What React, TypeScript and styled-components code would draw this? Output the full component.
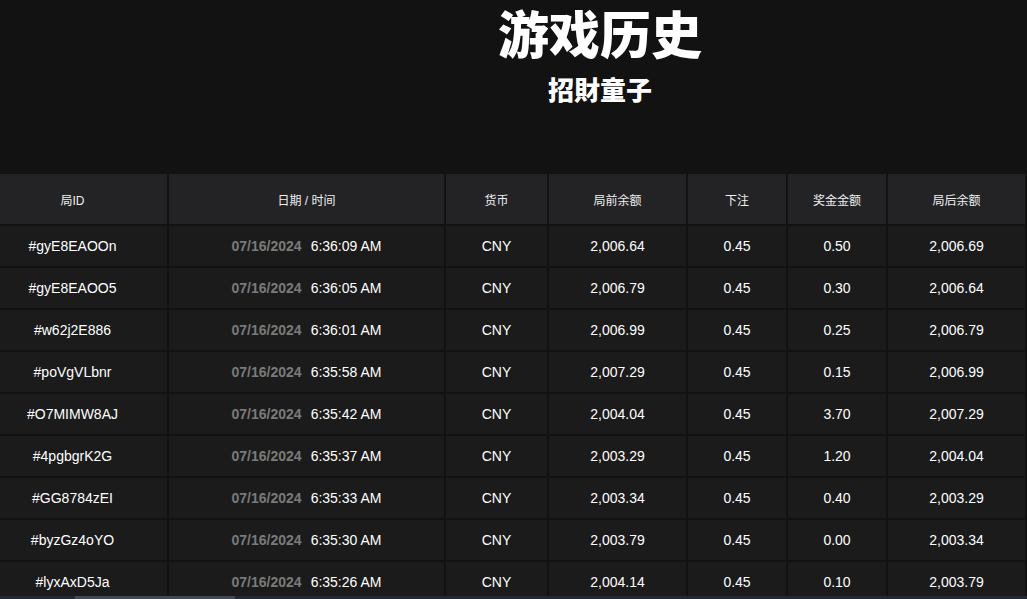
import React from "react";
import styled, { createGlobalStyle } from "styled-components";

const GlobalStyle = createGlobalStyle`
  html, body {
    margin: 0;
    padding: 0;
    background: #121213;
    overflow: hidden;
  }
  body {
    font-family: "Liberation Sans", Arial, sans-serif;
    color: #ffffff;
  }
`;

const Page = styled.div`
  width: 1027px;
  height: 599px;
  overflow: hidden;
  background: #121213;
  display: flex;
  flex-direction: column;
`;

const Hero = styled.header`
  flex-shrink: 0;
  height: 174px;
  box-sizing: border-box;
  padding-left: 173px;
  display: flex;
  flex-direction: column;
  align-items: center;
`;

const Title = styled.h1`
  margin: -1px 0 0;
  font-family: "Noto Sans CJK SC", sans-serif;
  font-weight: 900;
  font-size: 51px;
  line-height: 66px;
  color: #ffffff;
`;

const Subtitle = styled.h2`
  margin: 8px 0 0;
  font-family: "Noto Sans CJK SC", sans-serif;
  font-weight: 900;
  font-size: 26px;
  line-height: 32px;
  color: #ffffff;
`;

const Grid = styled.div`
  flex-shrink: 0;
  display: grid;
  grid-template-columns: 167px 275px 101px 137px 98px 98px 137px;
  column-gap: 2px;
  row-gap: 2px;
  width: 1025px;
  padding-right: 2px;
  background: #121213;
`;

const HeadCell = styled.div<{ $first?: boolean }>`
  height: 50px;
  box-sizing: border-box;
  padding-right: ${(p) => (p.$first ? "22px" : "0")};
  background: #232325;
  display: flex;
  align-items: center;
  justify-content: center;
  font-family: "Liberation Sans", "Noto Sans CJK SC", sans-serif;
  font-size: 12px;
  color: #f0f0f0;
`;

const Cell = styled.div<{ $first?: boolean }>`
  height: 40px;
  box-sizing: border-box;
  padding-right: ${(p) => (p.$first ? "22px" : "0")};
  background: #1b1b1c;
  display: flex;
  align-items: center;
  justify-content: center;
  font-size: 14px;
  color: #ffffff;
  white-space: nowrap;
`;

const DateText = styled.span`
  font-weight: 700;
  color: #7a7a7a;
  margin-right: 9px;
`;

const ScrollTrack = styled.div`
  position: fixed;
  left: 0;
  bottom: 0;
  width: 1027px;
  height: 3px;
  background: #222b33;
`;

const ScrollThumb = styled.div`
  position: absolute;
  left: 75px;
  top: 0;
  width: 160px;
  height: 3px;
  background: #3f4a54;
`;

const headers = ["局ID", "日期 / 时间", "货币", "局前余额", "下注", "奖金金额", "局后余额"];

const rows = [
  ["#gyE8EAOOn", "6:36:09 AM", "2,006.64", "0.45", "0.50", "2,006.69"],
  ["#gyE8EAOO5", "6:36:05 AM", "2,006.79", "0.45", "0.30", "2,006.64"],
  ["#w62j2E886", "6:36:01 AM", "2,006.99", "0.45", "0.25", "2,006.79"],
  ["#poVgVLbnr", "6:35:58 AM", "2,007.29", "0.45", "0.15", "2,006.99"],
  ["#O7MIMW8AJ", "6:35:42 AM", "2,004.04", "0.45", "3.70", "2,007.29"],
  ["#4pgbgrK2G", "6:35:37 AM", "2,003.29", "0.45", "1.20", "2,004.04"],
  ["#GG8784zEI", "6:35:33 AM", "2,003.34", "0.45", "0.40", "2,003.29"],
  ["#byzGz4oYO", "6:35:30 AM", "2,003.79", "0.45", "0.00", "2,003.34"],
  ["#lyxAxD5Ja", "6:35:26 AM", "2,004.14", "0.45", "0.10", "2,003.79"],
];

export default function App() {
  return (
    <Page>
      <GlobalStyle />
      <Hero>
        <Title>游戏历史</Title>
        <Subtitle>招財童子</Subtitle>
      </Hero>
      <Grid>
        {headers.map((h, i) => (
          <HeadCell key={h} $first={i === 0}>
            {h}
          </HeadCell>
        ))}
        {rows.map((r) => (
          <React.Fragment key={r[0]}>
            <Cell $first>{r[0]}</Cell>
            <Cell>
              <DateText>07/16/2024</DateText>
              {r[1]}
            </Cell>
            <Cell>CNY</Cell>
            <Cell>{r[2]}</Cell>
            <Cell>{r[3]}</Cell>
            <Cell>{r[4]}</Cell>
            <Cell>{r[5]}</Cell>
          </React.Fragment>
        ))}
      </Grid>
      <ScrollTrack>
        <ScrollThumb />
      </ScrollTrack>
    </Page>
  );
}
